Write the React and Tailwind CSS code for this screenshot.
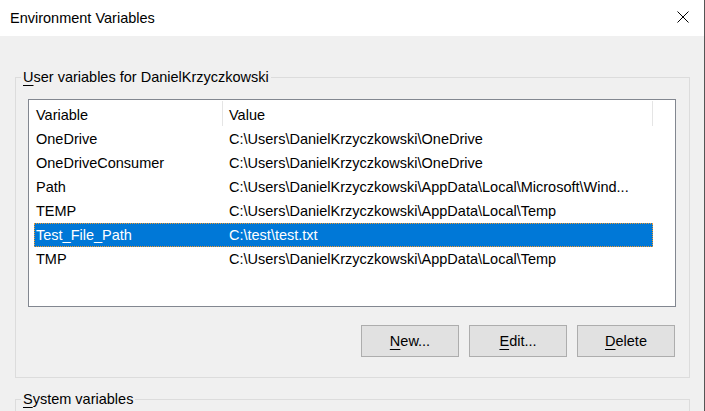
export default function App() {
  const rows = [
    { name: "OneDrive", value: "C:\\Users\\DanielKrzyczkowski\\OneDrive" },
    { name: "OneDriveConsumer", value: "C:\\Users\\DanielKrzyczkowski\\OneDrive" },
    { name: "Path", value: "C:\\Users\\DanielKrzyczkowski\\AppData\\Local\\Microsoft\\Wind..." },
    { name: "TEMP", value: "C:\\Users\\DanielKrzyczkowski\\AppData\\Local\\Temp" },
    { name: "Test_File_Path", value: "C:\\test\\test.txt", selected: true },
    { name: "TMP", value: "C:\\Users\\DanielKrzyczkowski\\AppData\\Local\\Temp" },
  ];

  return (
    <div className="w-[705px] h-[411px] overflow-hidden bg-[#f0f0f0] border-r border-[#555555] flex flex-col text-[14.5px] leading-[20px] text-black font-['Liberation_Sans',Arial,sans-serif]">
      {/* Title bar */}
      <div className="h-[36px] shrink-0 bg-white flex items-start">
        <span className="ml-[10px] mt-[8px] whitespace-nowrap">Environment Variables</span>
        <svg className="ml-auto mt-[11px] mr-[15px]" width="12" height="12" viewBox="0 0 12 12">
          <path d="M0.5 0.5 L11.5 11.5 M11.5 0.5 L0.5 11.5" stroke="#000" strokeWidth="1" fill="none" />
        </svg>
      </div>

      <div className="flex flex-col pl-[15px] pr-[14px]">
        {/* User variables group */}
        <div className="relative mt-[41px] border border-[#dcdcdc] pl-[12px] pr-[13px] pt-[21px] pb-[20px]">
          <div className="absolute left-[5px] -top-[11px] px-[2px] bg-[#f0f0f0] whitespace-nowrap">
            <span className="underline underline-offset-[3px]">U</span>ser variables for DanielKrzyczkowski
          </div>

          <div className="w-[648px] h-[208px] border border-[#828790] bg-white flex flex-col">
            <div className="h-[27px] flex shrink-0">
              <div className="w-[193px] pl-[7px] pt-[5px]">Variable</div>
              <div className="w-px h-[25px] mt-[1px] bg-[#e5e5e5]" />
              <div className="w-[429px] pl-[6px] pt-[5px]">Value</div>
              <div className="w-px h-[25px] mt-[1px] bg-[#e5e5e5]" />
            </div>
            <div className="ml-[5px] w-[619px] flex flex-col">
              {rows.map((r) => (
                <div
                  key={r.name}
                  className={
                    r.selected
                      ? "h-[24px] flex items-center border border-dotted border-[#f29a2e] bg-[#0078d7] text-white"
                      : "h-[24px] flex items-center border border-transparent"
                  }
                >
                  <div className="w-[194px] pl-[1px] whitespace-nowrap">{r.name}</div>
                  <div className="flex-1 whitespace-nowrap overflow-hidden">{r.value}</div>
                </div>
              ))}
            </div>
          </div>

          <div className="flex justify-end gap-[10px] mt-[18px] mr-[1px]">
            <button className="w-[98px] h-[32px] border border-[#adadad] bg-[#e1e1e1] flex items-center justify-center">
              <span><span className="underline underline-offset-[3px]">N</span>ew...</span>
            </button>
            <button className="w-[98px] h-[32px] border border-[#adadad] bg-[#e1e1e1] flex items-center justify-center">
              <span><span className="underline underline-offset-[3px]">E</span>dit...</span>
            </button>
            <button className="w-[98px] h-[32px] border border-[#adadad] bg-[#e1e1e1] flex items-center justify-center">
              <span><span className="underline underline-offset-[3px]">D</span>elete</span>
            </button>
          </div>
        </div>

        {/* System variables group */}
        <div className="relative mt-[21px] h-[60px] border-l border-t border-r border-[#dcdcdc]">
          <div className="absolute left-[5px] -top-[11px] px-[2px] bg-[#f0f0f0] whitespace-nowrap">
            <span className="underline underline-offset-[3px]">S</span>ystem variables
          </div>
        </div>
      </div>
    </div>
  );
}
